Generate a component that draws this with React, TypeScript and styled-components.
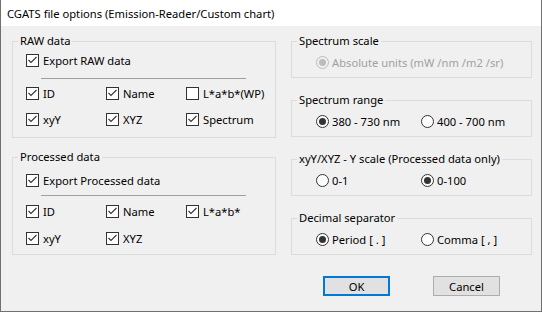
import React from 'react';
import styled, { createGlobalStyle } from 'styled-components';

const Global = createGlobalStyle`
  html, body { margin: 0; padding: 0; background: #ffffff; }
  body {
    font-family: "Noto Sans", "Open Sans", sans-serif;
    font-size: 11.2px;
    color: #000;
  }
  * { box-sizing: border-box; }
`;

const Window = styled.div`
  width: 542px;
  height: 312px;
  border: 1px solid #707070;
  border-top: none;
  background: #f0f0f0;
  display: flex;
  flex-direction: column;
`;

const TitleBar = styled.div`
  height: 26px;
  background: #ffffff;
  padding-left: 6px;
  display: flex;
  align-items: center;
  font-size: 11.2px;
  color: #000;
`;

const Body = styled.div`
  flex: 1;
  display: flex;
  gap: 15px;
  padding: 8px 9px 0 11px;
`;

const LeftCol = styled.div`
  width: 264px;
  display: flex;
  flex-direction: column;
  gap: 12px;
`;

const RightCol = styled.div`
  width: 241px;
  display: flex;
  flex-direction: column;
  gap: 15px;
`;

const Group = styled.fieldset`
  margin: 0;
  padding: 0;
  min-width: 0;
  border: 1px solid #dcdcdc;
`;

const Legend = styled.legend`
  margin-left: 5px;
  padding: 0 2px;
  line-height: 14px;
  font-size: 11.2px;
  color: #000;
`;

type Spacing = { $top: number; $sepTop: number; $sepBottom: number; $rowGap: number; $bottom: number };

const CheckInner = styled.div<Spacing>`
  padding: ${(p) => p.$top}px 0 ${(p) => p.$bottom}px 13px;
  display: flex;
  flex-direction: column;
  --row-gap: ${(p) => p.$rowGap}px;
  --sep-top: ${(p) => p.$sepTop}px;
  --sep-bottom: ${(p) => p.$sepBottom}px;
`;

const Separator = styled.div`
  margin: var(--sep-top) 0 var(--sep-bottom) 15px;
  width: 205px;
  height: 1px;
  background: #a0a0a0;
`;

const CheckGrid = styled.div`
  display: grid;
  grid-template-columns: 80px 80px 80px;
  row-gap: var(--row-gap);
`;

const Item = styled.label`
  display: flex;
  align-items: center;
  height: 17px;
  gap: 4px;
  white-space: nowrap;
`;

const Box = styled.span`
  width: 13px;
  height: 13px;
  flex: none;
  border: 1px solid #333333;
  background: #ffffff;
  display: flex;
`;

const ItemText = styled.span<{ $disabled?: boolean }>`
  color: ${(p) => (p.$disabled ? '#a0a0a0' : '#000')};
  line-height: 17px;
`;

const Check = ({ label, checked }: { label: string; checked: boolean }) => (
  <Item>
    <Box>
      {checked && (
        <svg width="11" height="11" viewBox="0 0 11 11">
          <polyline points="1.5,5 4,7.5 9.5,2" fill="none" stroke="#333" strokeWidth="1.1" />
        </svg>
      )}
    </Box>
    <ItemText>{label}</ItemText>
  </Item>
);

const RadioInner = styled.div`
  padding: 6px 0 7px 24px;
  display: grid;
  grid-template-columns: 105px 105px;
`;

const Circle = styled.span<{ $disabled?: boolean }>`
  width: 13px;
  height: 13px;
  flex: none;
  border-radius: 50%;
  border: 1px solid ${(p) => (p.$disabled ? '#bcbcbc' : '#333333')};
  background: ${(p) => (p.$disabled ? '#f0f0f0' : '#ffffff')};
  display: flex;
  align-items: center;
  justify-content: center;
`;

const Dot = styled.span<{ $disabled?: boolean }>`
  width: 7px;
  height: 7px;
  border-radius: 50%;
  background: ${(p) => (p.$disabled ? '#bcbcbc' : '#333333')};
`;

const RadioItem = styled(Item)`
  height: 16px;
  gap: 3px;
`;

const Radio = ({ label, checked, disabled }: { label: string; checked: boolean; disabled?: boolean }) => (
  <RadioItem>
    <Circle $disabled={disabled}>{checked && <Dot $disabled={disabled} />}</Circle>
    <ItemText $disabled={disabled}>{label}</ItemText>
  </RadioItem>
);

const Buttons = styled.div`
  margin-top: 6px;
  display: flex;
  justify-content: center;
  gap: 43px;
`;

const Button = styled.button<{ $default?: boolean }>`
  width: 67px;
  height: 20px;
  padding: 0;
  font-family: inherit;
  font-size: 11.2px;
  color: #000;
  background: #e1e1e1;
  border: ${(p) => (p.$default ? '2px solid #0078d7' : '1px solid #adadad')};
`;

export default function App() {
  return (
    <>
      <Global />
      <Window>
        <TitleBar>CGATS file options (Emission-Reader/Custom chart)</TitleBar>
        <Body>
          <LeftCol>
            <Group>
              <Legend>RAW data</Legend>
              <CheckInner $top={4} $sepTop={9} $sepBottom={6} $rowGap={9} $bottom={9}>
                <Check label="Export RAW data" checked />
                <Separator />
                <CheckGrid>
                  <Check label="ID" checked />
                  <Check label="Name" checked />
                  <Check label="L*a*b*(WP)" checked={false} />
                  <Check label="xyY" checked />
                  <Check label="XYZ" checked />
                  <Check label="Spectrum" checked />
                </CheckGrid>
              </CheckInner>
            </Group>
            <Group>
              <Legend>Processed data</Legend>
              <CheckInner $top={8} $sepTop={6} $sepBottom={7} $rowGap={10} $bottom={7}>
                <Check label="Export Processed data" checked />
                <Separator />
                <CheckGrid>
                  <Check label="ID" checked />
                  <Check label="Name" checked />
                  <Check label="L*a*b*" checked />
                  <Check label="xyY" checked />
                  <Check label="XYZ" checked />
                </CheckGrid>
              </CheckInner>
            </Group>
          </LeftCol>
          <RightCol>
            <Group>
              <Legend>Spectrum scale</Legend>
              <RadioInner>
                <Radio label="Absolute units (mW /nm /m2 /sr)" checked disabled />
              </RadioInner>
            </Group>
            <Group>
              <Legend>Spectrum range</Legend>
              <RadioInner>
                <Radio label="380 - 730 nm" checked />
                <Radio label="400 - 700 nm" checked={false} />
              </RadioInner>
            </Group>
            <Group>
              <Legend>xyY/XYZ - Y scale (Processed data only)</Legend>
              <RadioInner>
                <Radio label="0-1" checked={false} />
                <Radio label="0-100" checked />
              </RadioInner>
            </Group>
            <Group>
              <Legend>Decimal separator</Legend>
              <RadioInner>
                <Radio label="Period [ . ]" checked />
                <Radio label="Comma [ , ]" checked={false} />
              </RadioInner>
            </Group>
            <Buttons>
              <Button $default>OK</Button>
              <Button>Cancel</Button>
            </Buttons>
          </RightCol>
        </Body>
      </Window>
    </>
  );
}
